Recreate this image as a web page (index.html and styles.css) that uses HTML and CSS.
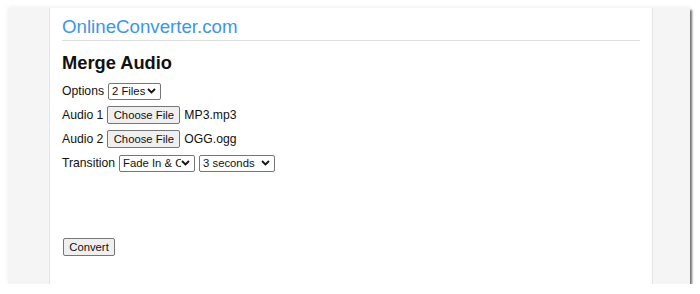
FILE: index.html
```html
<!DOCTYPE html>
<html lang="en">

<head>
    <meta charset="UTF-8">
    <title>Merge Audio - OnlineConverter.com</title>
    <link rel="stylesheet" href="styles.css">
</head>

<body>
    <div class="window">
        <div class="side side-left"></div>
        <div class="main">
            <div class="site-name">OnlineConverter.com</div>
            <h1>Merge Audio</h1>
            <div class="form-row">
                Options
                <select class="ctl sel-opts">
                    <option>2 Files</option>
                    <option>3 Files</option>
                </select>
            </div>
            <div class="form-row">
                Audio 1
                <button class="ctl file-btn">Choose File</button>
                <span>MP3.mp3</span>
            </div>
            <div class="form-row">
                Audio 2
                <button class="ctl file-btn">Choose File</button>
                <span>OGG.ogg</span>
            </div>
            <div class="form-row transition-row">
                Transition
                <select class="ctl sel-fade">
                    <option>Fade In &amp; Out</option>
                </select>
                <select class="ctl sel-secs">
                    <option>3 seconds</option>
                </select>
            </div>
            <div class="submit-row">
                <button class="ctl convert-btn">Convert</button>
            </div>
        </div>
        <div class="side side-right"></div>
    </div>
</body>

</html>
```
FILE: styles.css
```css
body {
    margin: 0;
    background: #fff;
    font-family: Arial, 'Liberation Sans', sans-serif;
    font-size: 12.2px;
    color: #111;
}

.window {
    display: flex;
    margin: 8px 0 0 8px;
    width: 682px;
    height: 276px;
    background: #fff;
    box-shadow: 2px 2px 2px rgba(0, 0, 0, 0.55), 0 -1px 5px rgba(0, 0, 0, 0.06);
}

.side {
    background: #f5f5f5;
}

.side-left {
    width: 41px;
    border-right: 1px solid #e4e4e4;
}

.side-right {
    width: 37px;
    border-left: 1px solid #e4e4e4;
}

.main {
    flex: 1;
    padding: 0 12px;
}

.site-name {
    font-size: 18.7px;
    line-height: 21px;
    color: #3d95e6;
    padding: 8px 0 3px;
    border-bottom: 1px solid #dedede;
}

h1 {
    font-size: 18.3px;
    line-height: 21px;
    font-weight: bold;
    margin: 11px 0 9px;
}

.form-row {
    display: flex;
    align-items: center;
    gap: 4px;
    height: 18px;
    margin-bottom: 6px;
}

.transition-row {
    margin-top: 2px;
}

.ctl {
    font-family: Arial, 'Liberation Sans', sans-serif;
    font-size: 11.3px;
    color: #111;
    height: 18px;
    box-sizing: border-box;
}

select.ctl {
    appearance: none;
    height: 17px;
    border: 1px solid #767676;
    border-radius: 2px;
    padding: 0 13px 0 3px;
    background: #fff url("data:image/svg+xml,%3Csvg xmlns='http://www.w3.org/2000/svg' width='9' height='6' viewBox='0 0 9 6'%3E%3Cpath d='M1 1l3.5 3.5L8 1' fill='none' stroke='%23111' stroke-width='1.8'/%3E%3C/svg%3E") no-repeat right 4px center;
}

.sel-opts {
    width: 53px;
}

.sel-fade,
.sel-secs {
    width: 76px;
}

.file-btn,
.convert-btn {
    border: 1px solid #767676;
    border-radius: 2px;
    background: #efefef;
    padding: 0;
}

.file-btn {
    width: 73px;
}

.submit-row {
    margin-top: 66px;
}

.convert-btn {
    width: 52px;
    margin-left: 1px;
}
```
